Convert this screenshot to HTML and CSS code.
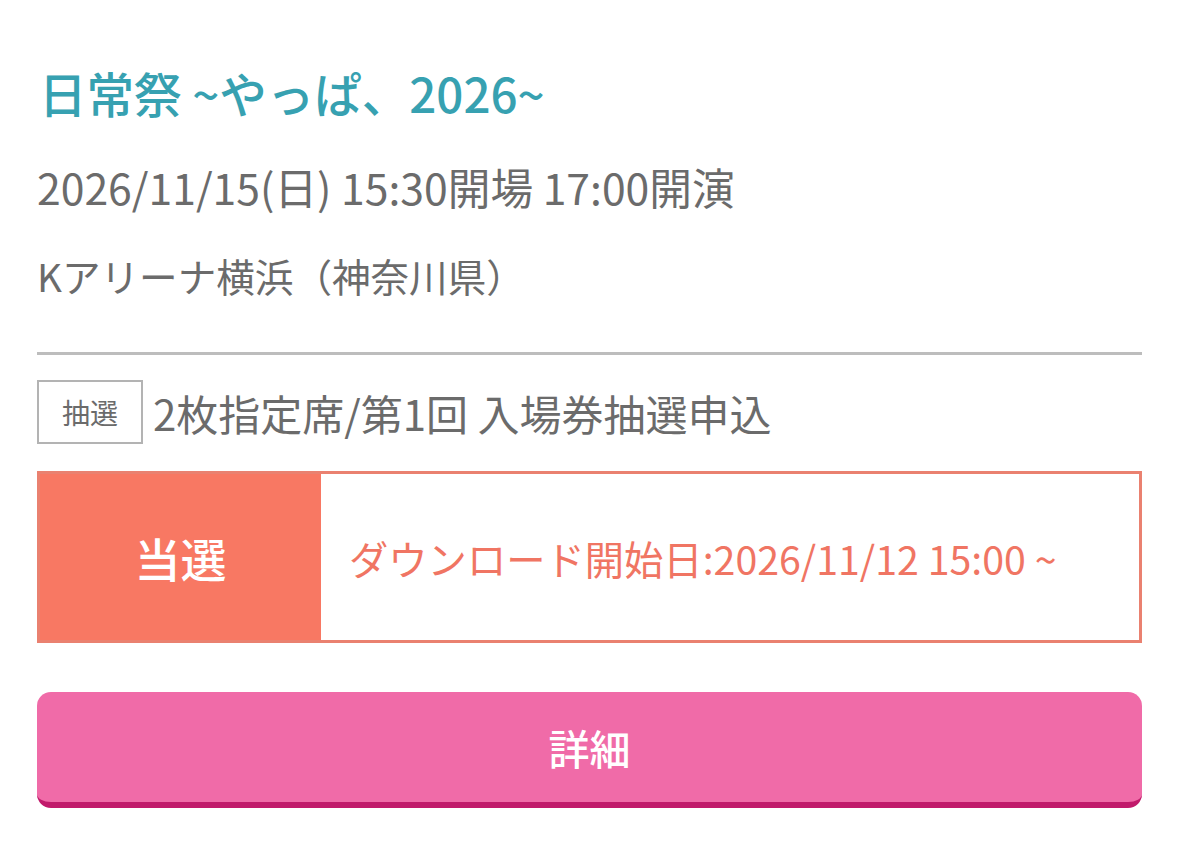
FILE: index.html
```html
<!DOCTYPE html>
<html lang="ja">
<head>
    <meta charset="UTF-8">
    <title>日常祭 ~やっぱ、2026~</title>
    <link rel="stylesheet" href="styles.css">
</head>
<body>
    <div class="container">
        <h1 class="title">日常祭 ~やっぱ、2026~</h1>
        <p class="date">2026/11/15(日) 15:30開場 17:00開演</p>
        <p class="venue">Kアリーナ横浜（神奈川県）</p>

        <div class="ticket">
            <div class="ticket-head">
                <span class="tag">抽選</span>
                <span class="ticket-name">2枚指定席/第1回 入場券抽選申込</span>
            </div>
            <div class="result">
                <div class="result-label">当選</div>
                <div class="result-text">ダウンロード開始日:2026/11/12 15:00 ~</div>
            </div>
            <button class="detail-btn" type="button">詳細</button>
        </div>
    </div>
</body>
</html>
```

FILE: styles.css
```css
* {
    margin: 0;
    padding: 0;
    box-sizing: border-box;
    font-family: "Noto Sans CJK JP", "Noto Sans", sans-serif;
}

body {
    background: #fff;
    color: #6b6b6b;
}

.container {
    padding: 63px 37px 0 37px;
}

.title {
    font-size: 47.5px;
    font-weight: 500;
    color: #37a1b1;
    line-height: 60px;
    padding-left: 2px;
}

.date {
    font-size: 42.7px;
    line-height: 54px;
    margin-top: 36px;
}

.venue {
    font-size: 38.6px;
    line-height: 50px;
    margin-top: 37px;
}

.ticket {
    margin-top: 52px;
    border-top: 3px solid #bdbdbd;
    padding-top: 25px;
}

.ticket-head {
    display: flex;
    align-items: center;
    gap: 10px;
}

.tag {
    display: flex;
    align-items: center;
    justify-content: center;
    width: 106px;
    height: 64px;
    border: 2px solid #b3b3b3;
    font-size: 28px;
    color: #6b6b6b;
}

.ticket-name {
    font-size: 42px;
}

.result {
    display: flex;
    margin-top: 27px;
    height: 172px;
    border: 3px solid #ea8170;
}

.result-label {
    width: 281px;
    background: #f87863;
    color: #fff;
    font-size: 46px;
    font-weight: 500;
    display: flex;
    align-items: center;
    justify-content: center;
}

.result-text {
    flex: 1;
    display: flex;
    align-items: center;
    padding-left: 28px;
    font-size: 39.3px;
    color: #f07563;
}

.detail-btn {
    display: block;
    width: 100%;
    height: 116px;
    margin-top: 49px;
    border: none;
    border-bottom: 6px solid #c11a6b;
    border-radius: 14px;
    background: #f06ba8;
    color: #fff;
    font-size: 41px;
    font-weight: 500;
    cursor: pointer;
}
```
